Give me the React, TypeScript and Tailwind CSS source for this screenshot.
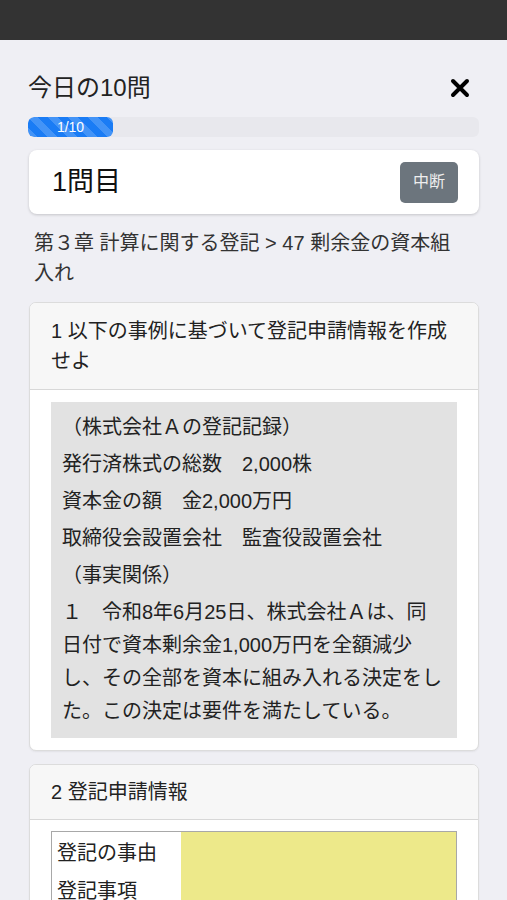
import React from "react";

const facts = [
  "（株式会社Ａの登記記録）",
  "発行済株式の総数　2,000株",
  "資本金の額　金2,000万円",
  "取締役会設置会社　監査役設置会社",
  "（事実関係）",
  "１　令和8年6月25日、株式会社Ａは、同日付で資本剰余金1,000万円を全額減少し、その全部を資本に組み入れる決定をした。この決定は要件を満たしている。",
];

const rows = ["登記の事由", "登記事項", ""];

export default function App() {
  return (
    <div className="min-h-[900px] bg-[#efeff4] font-['Liberation_Sans','Noto_Sans_CJK_JP',sans-serif] text-[#222]">
      <div className="h-[40px] bg-[#333333]" />

      <div className="px-[28px] pt-[30px]">
        <div className="flex items-center justify-between">
          <h1 className="text-[24px] leading-[36px]">今日の10問</h1>
          <button type="button" className="mr-[8px] text-black">
            <svg width="22" height="22" viewBox="0 0 22 22">
              <path d="M4 4 L18 18 M18 4 L4 18" stroke="currentColor" strokeWidth="4" strokeLinecap="round" />
            </svg>
          </button>
        </div>

        <div className="mt-[11px] h-[20px] w-full overflow-hidden rounded-[6px] bg-[#e8e8ed]">
          <div className="flex h-full w-[85px] items-center justify-center rounded-[6px] bg-[#1a7cf5] bg-[image:repeating-linear-gradient(45deg,rgba(255,255,255,0.18)_0_7px,transparent_7px_14px)] text-[14px] leading-none text-white">
            1/10
          </div>
        </div>

        <div className="ml-px mt-[13px] flex h-[64px] items-center justify-between rounded-[8px] bg-white pl-[23px] pr-[21px] shadow-[0_1px_3px_rgba(0,0,0,0.18)]">
          <span className="text-[27px] leading-none text-[#111]">1問目</span>
          <button type="button" className="h-[41px] rounded-[5px] bg-[#6c757d] px-[13px] text-[16px] text-[#eeeeee]">
            中断
          </button>
        </div>

        <p className="mt-[14px] pl-[6px] pr-[12px] text-[20px] leading-[30px] text-[#333]">
          第３章 計算に関する登記 &gt; 47 剰余金の資本組入れ
        </p>

        <section className="ml-px mt-[14px] overflow-hidden rounded-[7px] border border-[#dcdcdc] bg-white shadow-[0_1px_2px_rgba(0,0,0,0.06)]">
          <div className="border-b border-[#d8d8d8] bg-[#f7f7f7] px-[21px] py-[13px] text-[20px] leading-[30px]">
            1 以下の事例に基づいて登記申請情報を作成せよ
          </div>
          <div className="px-[21px] py-[12px]">
            <div className="flex flex-col gap-[4px] bg-[#e2e2e2] px-[11px] pb-[10px] pt-[9px] text-[20px] leading-[33px]">
              {facts.map((f) => (
                <p key={f}>{f}</p>
              ))}
            </div>
          </div>
        </section>

        <section className="ml-px mt-[13px] overflow-hidden rounded-[7px] border border-[#dcdcdc] bg-white shadow-[0_1px_2px_rgba(0,0,0,0.06)]">
          <div className="border-b border-[#d8d8d8] bg-[#f7f7f7] px-[21px] py-[12px] text-[20px] leading-[30px]">
            2 登記申請情報
          </div>
          <div className="px-[21px] pt-[11px]">
            <div className="grid grid-cols-[129px_1fr] border border-[#a8a8a8]">
              {rows.map((r, i) => (
                <React.Fragment key={i}>
                  <div className="h-[38px] pl-[5px] pt-[2px] text-[20px] leading-[38px]">{r}</div>
                  <div className="h-[38px] bg-[#ede98a]" />
                </React.Fragment>
              ))}
            </div>
          </div>
        </section>
      </div>
    </div>
  );
}
